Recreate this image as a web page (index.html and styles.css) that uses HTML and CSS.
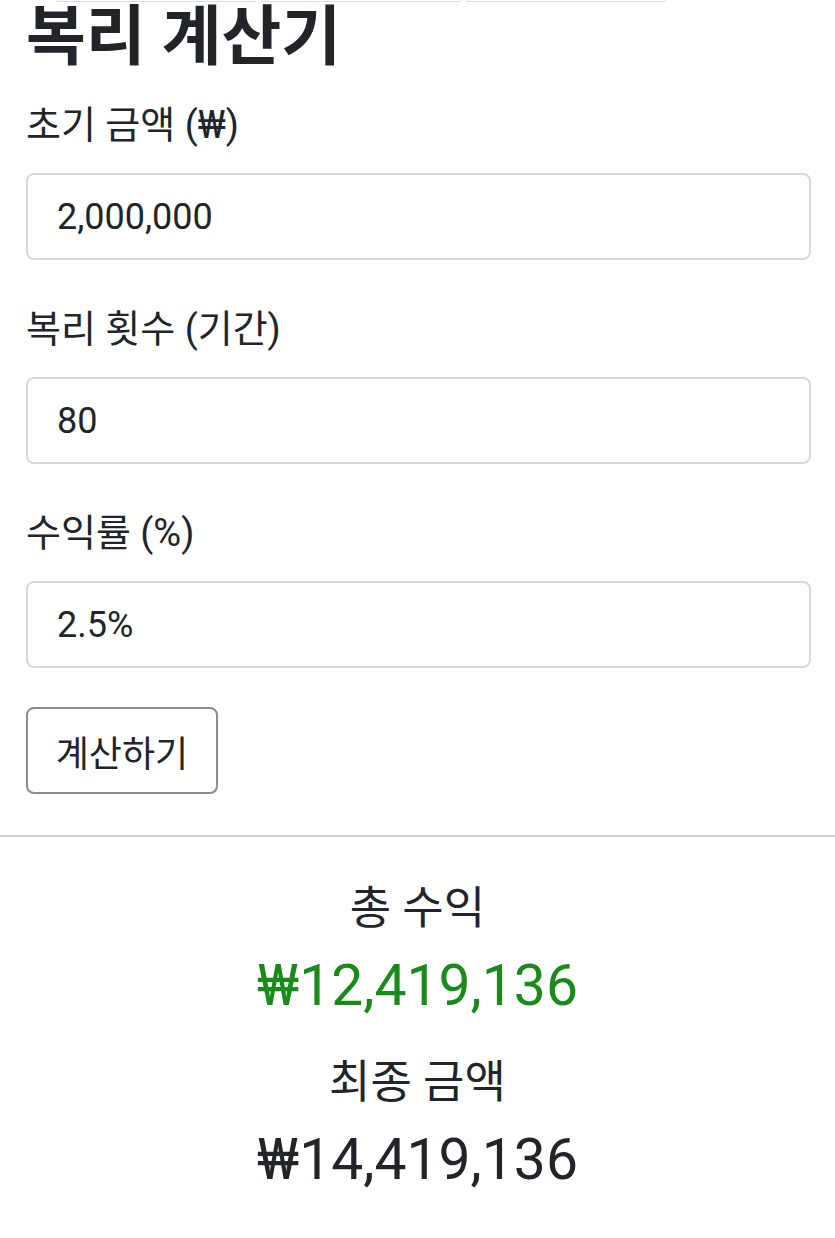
FILE: index.html
```html
<!DOCTYPE html>
<html lang="ko">
<head>
    <meta charset="UTF-8">
    <meta name="viewport" content="width=device-width, initial-scale=1.0">
    <title>복리 계산기</title>
    <link rel="stylesheet" href="styles.css">
</head>
<body>
    <div class="top-tabs">
        <span class="tab"></span>
        <span class="tab"></span>
        <span class="tab"></span>
    </div>

    <div class="calc-container">
        <h1 class="calc-title">복리 계산기</h1>

        <label class="field-label" for="principal">초기 금액 (₩)</label>
        <input type="text" class="field-input" id="principal" value="2,000,000">

        <label class="field-label" for="periods">복리 횟수 (기간)</label>
        <input type="text" class="field-input" id="periods" value="80">

        <label class="field-label" for="rate">수익률 (%)</label>
        <input type="text" class="field-input" id="rate" value="2.5%">

        <button class="calc-btn">계산하기</button>
    </div>

    <hr class="divider">

    <div class="result">
        <div class="result-label">총 수익</div>
        <div class="result-value profit">₩12,419,136</div>
        <div class="result-label">최종 금액</div>
        <div class="result-value">₩14,419,136</div>
    </div>
</body>
</html>
```

FILE: styles.css
```css
* {
    margin: 0;
    padding: 0;
    box-sizing: border-box;
    font-family: Roboto, "Noto Sans CJK KR", sans-serif;
}

body {
    background: #fff;
    color: #212529;
}

.top-tabs {
    display: flex;
    gap: 5px;
    padding-left: 56px;
    height: 2px;
}

.tab {
    width: 200px;
    height: 2px;
    border: 1px solid #dcdcdc;
    border-top: none;
    border-radius: 0 0 3px 3px;
}

.calc-container {
    display: flex;
    flex-direction: column;
    align-items: flex-start;
    padding: 0 24px 0 26px;
}

.calc-title {
    font-size: 65px;
    font-weight: 700;
    line-height: 70px;
    margin-bottom: 26px;
}

.field-label {
    font-size: 38px;
    line-height: 54px;
    margin-bottom: 21px;
}

.field-input {
    width: 100%;
    height: 87px;
    padding: 0 29px;
    border: 2px solid #d6d9dd;
    border-radius: 8px;
    font-size: 36px;
    color: #212529;
    background: #fff;
    outline: none;
    margin-bottom: 42px;
}

.calc-btn {
    width: 192px;
    height: 87px;
    margin-top: -3px;
    border: 2px solid #8c8c8c;
    border-radius: 8px;
    background: #fff;
    color: #212529;
    font-size: 36px;
}

.divider {
    border: none;
    border-top: 2px solid #d2d2d2;
    margin-top: 41px;
}

.result {
    display: flex;
    flex-direction: column;
    align-items: center;
    padding-top: 42px;
}

.result-label {
    font-size: 45px;
    line-height: 60px;
}

.result-value {
    font-size: 57px;
    line-height: 72px;
    margin: 11px 0 31px;
}

.result-value.profit {
    color: #1a8a1a;
}
```
